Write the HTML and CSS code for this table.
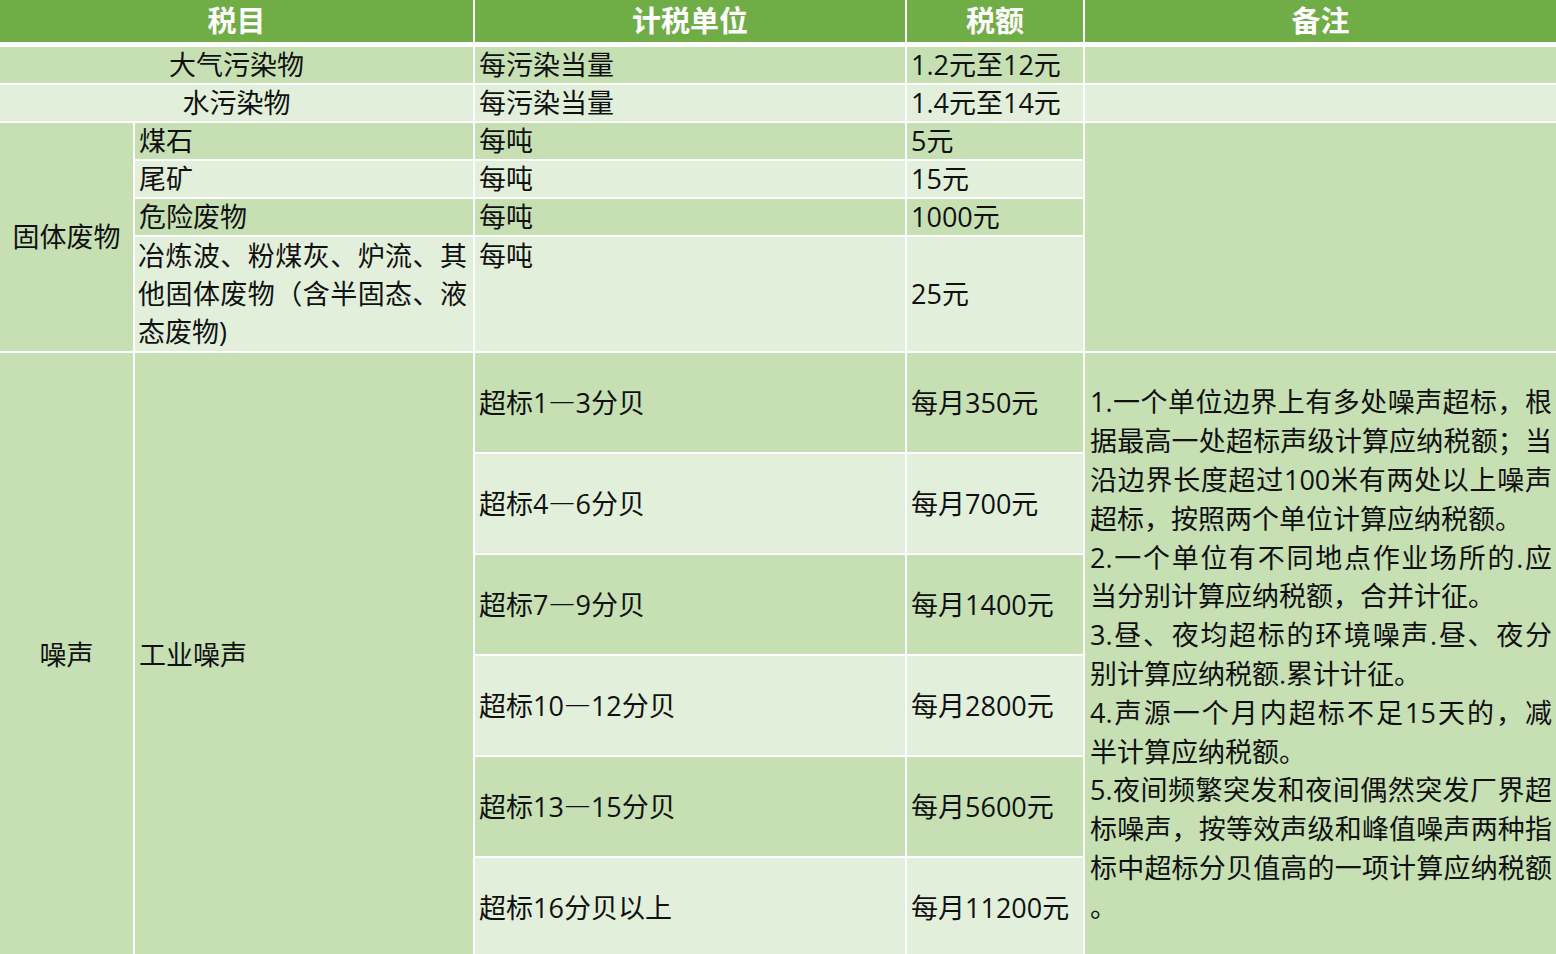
FILE: index.html
```html
<!DOCTYPE html>
<html lang="zh-CN">
<head>
<meta charset="utf-8">
<title>环境保护税税目税额表</title>
<link rel="stylesheet" href="styles.css">
</head>
<body>
<table class="tax">
  <colgroup>
    <col class="c1"><col class="c2"><col class="c3"><col class="c4"><col class="c5">
  </colgroup>
  <thead>
    <tr class="hrow">
      <th colspan="2">税目</th>
      <th>计税单位</th>
      <th>税额</th>
      <th class="last">备注</th>
    </tr>
  </thead>
  <tbody>
    <tr class="r dk">
      <td colspan="2" class="ctr">大气污染物</td>
      <td>每污染当量</td>
      <td>1.2元至12元</td>
      <td class="last"></td>
    </tr>
    <tr class="r lt">
      <td colspan="2" class="ctr">水污染物</td>
      <td>每污染当量</td>
      <td>1.4元至14元</td>
      <td class="last"></td>
    </tr>
    <tr class="r dk">
      <td rowspan="4" class="ctr dkc">固体废物</td>
      <td>煤石</td>
      <td>每吨</td>
      <td>5元</td>
      <td rowspan="4" class="last dkc"></td>
    </tr>
    <tr class="r lt">
      <td>尾矿</td>
      <td>每吨</td>
      <td>15元</td>
    </tr>
    <tr class="r dk">
      <td>危险废物</td>
      <td>每吨</td>
      <td>1000元</td>
    </tr>
    <tr class="rtall lt">
      <td class="multi">
        <div class="j">冶炼波、粉煤灰、炉流、其</div>
        <div class="j">他固体废物（含半固态、液</div>
        <div>态废物)</div>
      </td>
      <td class="top">每吨</td>
      <td>25元</td>
    </tr>
    <tr class="rn dk">
      <td rowspan="6" class="ctr dkc">噪声</td>
      <td rowspan="6" class="dkc">工业噪声</td>
      <td>超标1<span class="cjk">—</span>3分贝</td>
      <td>每月350元</td>
      <td rowspan="6" class="last dkc notes">
        <div class="j">1.一个单位边界上有多处噪声超标，根</div>
        <div class="j">据最高一处超标声级计算应纳税额；当</div>
        <div class="j">沿边界长度超过100米有两处以上噪声</div>
        <div>超标，按照两个单位计算应纳税额。</div>
        <div class="j">2.一个单位有不同地点作业场所的.应</div>
        <div>当分别计算应纳税额，合并计征。</div>
        <div class="j">3.昼、夜均超标的环境噪声.昼、夜分</div>
        <div>别计算应纳税额.累计计征。</div>
        <div class="j">4.声源一个月内超标不足15天的，减</div>
        <div>半计算应纳税额。</div>
        <div class="j">5.夜间频繁突发和夜间偶然突发厂界超</div>
        <div class="j">标噪声，按等效声级和峰值噪声两种指</div>
        <div class="j">标中超标分贝值高的一项计算应纳税额</div>
        <div>。</div>
      </td>
    </tr>
    <tr class="rn lt">
      <td>超标4<span class="cjk">—</span>6分贝</td>
      <td>每月700元</td>
    </tr>
    <tr class="rn dk">
      <td>超标7<span class="cjk">—</span>9分贝</td>
      <td>每月1400元</td>
    </tr>
    <tr class="rn lt">
      <td>超标10<span class="cjk">—</span>12分贝</td>
      <td>每月2800元</td>
    </tr>
    <tr class="rn dk">
      <td>超标13<span class="cjk">—</span>15分贝</td>
      <td>每月5600元</td>
    </tr>
    <tr class="rn lt">
      <td>超标16分贝以上</td>
      <td>每月11200元</td>
    </tr>
  </tbody>
</table>
</body>
</html>
```

FILE: styles.css
```css
html, body {
  margin: 0;
  padding: 0;
  background: #ffffff;
}

body {
  font-family: "Open Sans", "Noto Sans CJK SC", sans-serif;
  font-size: 27px;
  color: #111;
}

.tax {
  border-collapse: separate;
  border-spacing: 0;
  table-layout: fixed;
  width: 1556px;
}

.c1 { width: 135px; }
.c2 { width: 340px; }
.c3 { width: 432px; }
.c4 { width: 178px; }
.c5 { width: 471px; }

.tax th,
.tax td {
  border-right: 2px solid #ffffff;
  border-bottom: 2px solid #ffffff;
  padding: 0 4px 0 4px;
  vertical-align: middle;
  text-align: left;
  white-space: nowrap;
  overflow: hidden;
  line-height: 36px;
  font-weight: normal;
}

.tax .last {
  border-right: 0;
}

.hrow {
  height: 47px;
}

.tax th {
  background: #70ad47;
  color: #ffffff;
  font-weight: bold;
  font-size: 29px;
  text-align: center;
  border-bottom-width: 5px;
  line-height: 42px;
}

.r { height: 38px; }
.rtall { height: 116px; }
.rn { height: 101px; }

.dk td { background: #c6e0b4; }
.lt td { background: #e2efda; }
.tax td.dkc { background: #c6e0b4; }

.tax td.ctr { text-align: center; }
.tax td.top { vertical-align: top; line-height: 38px; }

.multi {
  vertical-align: top;
}
.tax td.multi {
  line-height: 37.7px;
  padding-left: 3px;
  padding-right: 6px;
}

.j {
  text-align: justify;
  text-align-last: justify;
}

.tax td.notes {
  line-height: 38.8px;
  padding-left: 5px;
  padding-right: 4px;
}

.cjk {
  font-family: "Noto Sans CJK SC", sans-serif;
}
```
